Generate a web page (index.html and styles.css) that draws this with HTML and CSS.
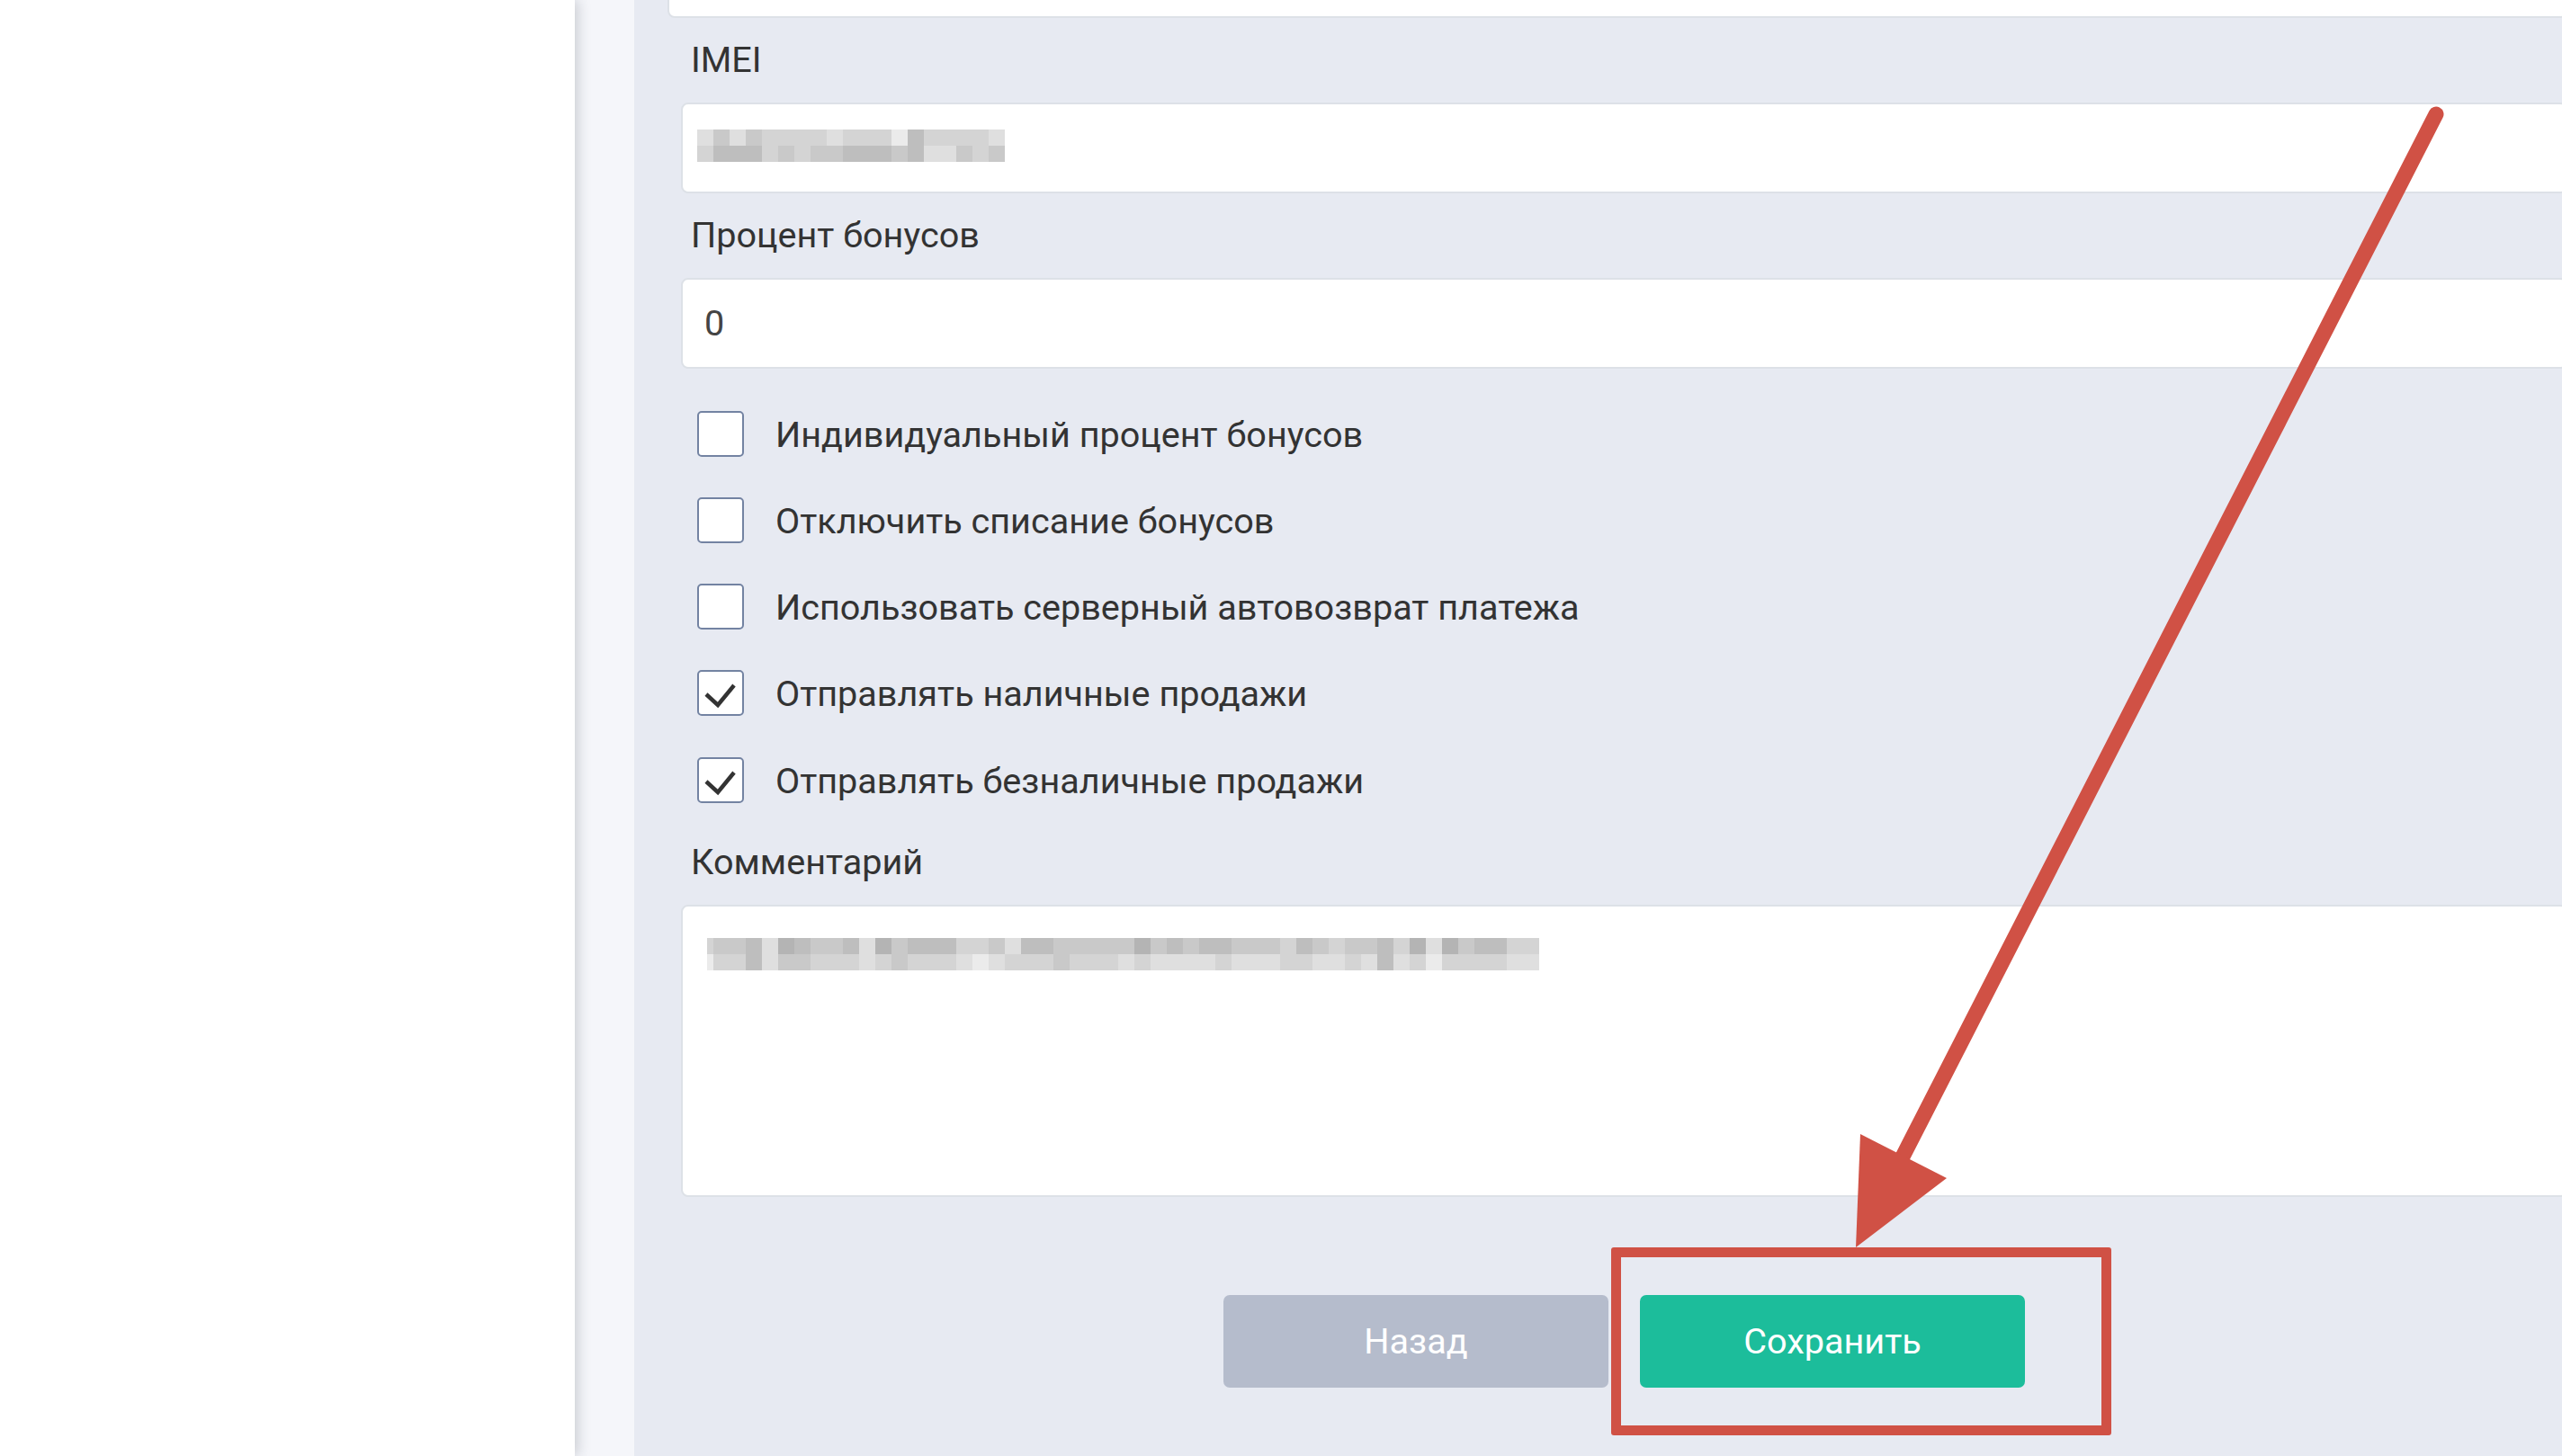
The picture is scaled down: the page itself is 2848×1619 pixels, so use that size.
FILE: index.html
```html
<!DOCTYPE html>
<html lang="ru">
<head>
  <meta charset="UTF-8">
  <meta name="viewport" content="width=device-width, initial-scale=1.0">
  <title>Настройки кассы</title>
  <link rel="stylesheet" href="styles.css">
</head>
<body>
  <div class="layout">
    <aside class="sidebar"></aside>

    <main class="main">
      <form class="panel" onsubmit="return false">
        <div class="prev-input"></div>

        <div class="field">
          <label class="field-label">IMEI</label>
          <div class="input input-masked">
            <div class="mosaic" id="imei-mosaic"></div>
          </div>
        </div>

        <div class="field">
          <label class="field-label">Процент бонусов</label>
          <div class="input">0</div>
        </div>

        <div class="checks">
          <label class="check">
            <span class="box"></span>
            <span class="check-text">Индивидуальный процент бонусов</span>
          </label>
          <label class="check">
            <span class="box"></span>
            <span class="check-text">Отключить списание бонусов</span>
          </label>
          <label class="check">
            <span class="box"></span>
            <span class="check-text">Использовать серверный автовозврат платежа</span>
          </label>
          <label class="check">
            <span class="box">
              <svg viewBox="0 0 48 47" width="48" height="47"><polyline points="8,25 21,37 39,15" /></svg>
            </span>
            <span class="check-text">Отправлять наличные продажи</span>
          </label>
          <label class="check">
            <span class="box">
              <svg viewBox="0 0 48 47" width="48" height="47"><polyline points="8,25 21,37 39,15" /></svg>
            </span>
            <span class="check-text">Отправлять безналичные продажи</span>
          </label>
        </div>

        <div class="field field-comment">
          <label class="field-label">Комментарий</label>
          <div class="textarea">
            <div class="mosaic" id="comment-mosaic"></div>
          </div>
        </div>

        <div class="actions">
          <button type="button" class="btn btn-back">Назад</button>
          <button type="submit" class="btn btn-save">Сохранить</button>
        </div>
      </form>
    </main>
  </div>

  <!-- annotation on top of the screenshot -->
  <div class="highlight"></div>
  <svg class="arrow" width="2848" height="1619" viewBox="0 0 2848 1619">
    <line x1="2708" y1="127" x2="2110" y2="1296" />
    <polygon points="2063,1387 2068,1261 2164,1310" />
  </svg>

  <script>
    // blurred (pixelated) values, one digit = one 18px block, 0 lightest .. 5 darkest
    const mosaics = {
      'imei-mosaic': [
        '1313222212220422221',
        '2444232334443411323'
      ],
      'comment-mosaic': [
        '2' + '3341543341534442231443333' + '3' + '5343443332432334251534422',
        '0' + '2241332221232221012223222' + '1' + '2111121112211214120222211'
      ]
    };

    Object.keys(mosaics).forEach(id => {
      const holder = document.getElementById(id);
      const narrowFirst = id === 'comment-mosaic';
      mosaics[id].forEach(row => {
        const line = document.createElement('div');
        line.className = 'mosaic-row';
        row.split('').forEach((shade, i) => {
          const cell = document.createElement('span');
          cell.className = 's' + shade + (narrowFirst && i === 0 ? ' narrow' : '');
          line.appendChild(cell);
        });
        holder.appendChild(line);
      });
    });
  </script>
</body>
</html>
```

FILE: styles.css
```css
html, body {
  margin: 0;
  height: 100%;
}
body {
  font-family: Roboto, "Noto Sans", sans-serif;
  font-size: 39.6px;
  color: #333;
  overflow: hidden;
  position: relative;
  background: #fff;
}
.layout {
  display: flex;
  height: 1619px;
}
.sidebar {
  width: 639px;
  flex-shrink: 0;
  background: #fff;
  box-shadow: 3px 0 14px rgba(40, 48, 66, 0.22);
  position: relative;
  z-index: 1;
}
.main {
  flex-shrink: 0;
  padding-left: 66px;
  background: #f5f6fa;
}
.panel {
  width: 2201px;
  height: 100%;
  box-sizing: border-box;
  padding: 0 52px;
  background: #e7eaf2;
  display: flex;
  flex-direction: column;
}
.prev-input {
  height: 60px;
  box-sizing: border-box;
  margin: -40px 0 0 -15px;
  background: #fff;
  border: 2px solid #dde1e7;
  border-radius: 8px;
}
.field-label {
  display: block;
  line-height: 48px;
  margin-top: 23px;
  padding-left: 11px;
}
.input {
  height: 101px;
  box-sizing: border-box;
  margin-top: 23px;
  padding: 0 24px;
  display: flex;
  align-items: center;
  line-height: 48px;
  background: #fff;
  border: 2px solid #dde1e7;
  border-radius: 8px;
  color: #444;
}
.input-masked {
  padding-left: 16px;
}
.input-masked .mosaic {
  margin-bottom: 5px;
}
.textarea {
  height: 325px;
  box-sizing: border-box;
  margin-top: 23px;
  padding: 35px 27px;
  background: #fff;
  border: 2px solid #dde1e7;
  border-radius: 8px;
}
.mosaic-row {
  display: flex;
}
.mosaic-row span {
  width: 18px;
  height: 18px;
}
.mosaic-row span.narrow {
  width: 7px;
}
.s0 { background: #ebebeb; }
.s1 { background: #dfdfdf; }
.s2 { background: #d4d4d4; }
.s3 { background: #c9c9c9; }
.s4 { background: #bebebe; }
.s5 { background: #b4b4b4; }

.checks {
  display: flex;
  flex-direction: column;
  gap: 44.3px;
  margin-top: 46px;
  padding-left: 18px;
}
.check {
  display: flex;
  align-items: center;
  height: 52px;
}
.box {
  width: 52px;
  height: 51px;
  box-sizing: border-box;
  flex-shrink: 0;
  border: 2px solid #7383a2;
  border-radius: 5px;
  background: #fff;
  display: flex;
  align-items: center;
  justify-content: center;
}
.box svg polyline {
  fill: none;
  stroke: #333;
  stroke-width: 4.5;
}
.check-text {
  margin-left: 35px;
  padding-top: 3px;
  line-height: 48px;
}
.field-comment .field-label {
  margin-top: 42px;
}
.actions {
  display: flex;
  justify-content: center;
  gap: 35px;
  margin-top: 109px;
}
.btn {
  width: 428px;
  height: 103px;
  border: none;
  border-radius: 7px;
  font-family: Roboto, "Noto Sans", sans-serif;
  font-size: 39.6px;
  color: #fff;
  cursor: pointer;
}
.btn-back {
  background: #b5bccc;
}
.btn-save {
  background: #1cbd9b;
}
.highlight {
  position: absolute;
  left: 1791px;
  top: 1387px;
  width: 556px;
  height: 209px;
  box-sizing: border-box;
  border: 11px solid #d05145;
  border-radius: 3px;
}
.arrow {
  position: absolute;
  left: 0;
  top: 0;
  pointer-events: none;
}
.arrow line {
  stroke: #d05145;
  stroke-width: 17;
  stroke-linecap: round;
}
.arrow polygon {
  fill: #d05145;
}
```
